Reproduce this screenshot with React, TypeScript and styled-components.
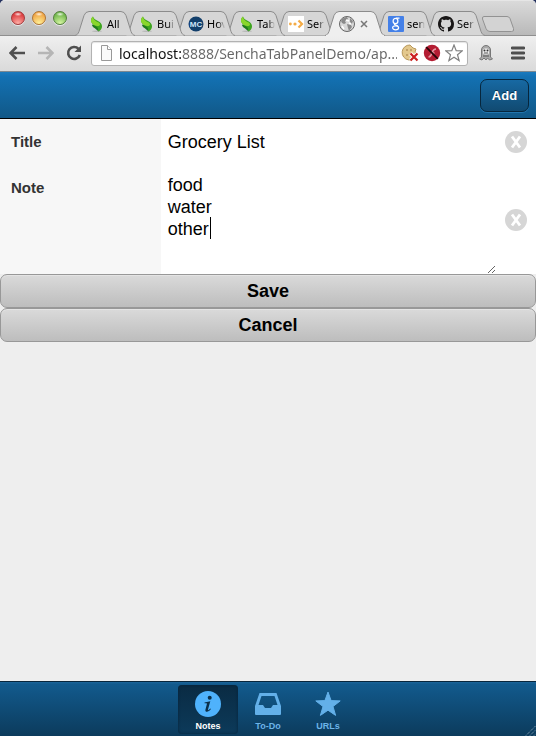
import React, { useState } from "react";
import styled, { createGlobalStyle, css } from "styled-components";

const uiFont = '"Noto Sans", "Open Sans", sans-serif';
const appFont = '"Liberation Sans", Arial, Helvetica, sans-serif';

const GlobalStyle = createGlobalStyle`
  * { box-sizing: border-box; }
  html, body { margin: 0; height: 100%; background: #23305e; }
  #root { height: 100%; }
  button, input, textarea { font: inherit; margin: 0; }
`;

const Window = styled.div`
  display: flex;
  flex-direction: column;
  height: 100vh;
  overflow: hidden;
  border-radius: 5px 5px 0 0;
  background: #eeeeee;
  font-family: ${appFont};
`;

/* ---------- browser chrome ---------- */

const TabStrip = styled.header`
  display: flex;
  align-items: flex-end;
  flex: none;
  height: 36px;
  padding-left: 11px;
  background: linear-gradient(#dadada, #b9b9b9);
  border-bottom: 1px solid #8f8f8f;
  border-top: 1px solid #e6e6e6;
  font-family: ${uiFont};
`;

const Lights = styled.div`
  display: flex;
  gap: 7px;
  width: 64px;
  flex: none;
  padding-bottom: 10px;
`;

const Light = styled.button<{ $dark: string; $mid: string; $pale: string }>`
  width: 14px;
  height: 14px;
  padding: 0;
  border: 1px solid ${(p) => p.$dark};
  border-radius: 50%;
  background:
    radial-gradient(ellipse 4px 2px at 50% 18%, #ffffffdd, #ffffff00),
    radial-gradient(circle at 50% 95%, ${(p) => p.$pale}, ${(p) => p.$mid} 75%);
  box-shadow: 0 1px 0 #e8e8e8;
`;

const Tabs = styled.nav`
  display: flex;
  align-items: flex-end;
  min-width: 0;
`;

const TabButton = styled.button<{ $order: number }>`
  position: relative;
  z-index: ${(p) => p.$order};
  display: flex;
  align-items: center;
  gap: 3px;
  flex: none;
  width: 60px;
  height: 25px;
  margin: 0 -10px -1px 0;
  padding: 0 10px 0 13px;
  border: 0;
  background: none;
  color: #000;
  font-size: 11px;
  text-align: left;
  white-space: nowrap;
  & > svg { flex: none; position: relative; }
`;

const TabShape = styled.svg`
  && { position: absolute; left: 0; top: 0; width: 100%; height: 100%; }
`;

const TabTitle = styled.span`
  position: relative;
  overflow: hidden;
  min-width: 0;
  flex: 1;
  mask-image: linear-gradient(90deg, #000 60%, #0000);
`;

const NewTab = styled.button`
  width: 34px;
  height: 16px;
  margin: 0 0 3px 6px;
  padding: 0;
  border: 0;
  background: none;
  & > svg { display: block; }
`;

const Toolbar = styled.div`
  display: flex;
  align-items: center;
  flex: none;
  height: 36px;
  padding: 0 11px 1px 9px;
  background: linear-gradient(#efefef, #dadada);
  border-bottom: 1px solid #7d8890;
  font-family: ${uiFont};
`;

const ToolButton = styled.button<{ $gap: number }>`
  display: flex;
  flex: none;
  padding: 0;
  margin-right: ${(p) => p.$gap}px;
  border: 0;
  background: none;
`;

const AddressBar = styled.form`
  display: flex;
  align-items: center;
  flex: 1;
  min-width: 0;
  height: 25px;
  gap: 4px;
  padding: 0 4px 0 9px;
  margin-right: 11px;
  border: 1px solid #b2b2b2;
  border-radius: 3px;
  background: #fff;
  box-shadow: inset 0 1px 1px #e4e4e4;
  & > svg, & > button { flex: none; }
`;

const Address = styled.input`
  flex: 1;
  min-width: 0;
  height: 20px;
  padding: 0;
  border: 0;
  outline: 0;
  background: linear-gradient(90deg, #111 62px, #666 62px);
  background-clip: text;
  color: transparent;
  font-size: 14px;
`;

/* ---------- application ---------- */

const TitleBar = styled.header`
  display: flex;
  align-items: center;
  justify-content: flex-end;
  flex: none;
  height: 47px;
  padding: 0 7px;
  background: linear-gradient(#1a7abf, #1371b3 10%, #115887);
  border-bottom: 1px solid #000;
`;

const AddButton = styled.button`
  width: 49px;
  height: 33px;
  padding: 0;
  border: 1px solid #07263c;
  border-radius: 7px;
  background: linear-gradient(#1769a3, #114a71);
  box-shadow: 0 1px 0 #2375ad;
  color: #fff;
  font-size: 13px;
  font-weight: bold;
  text-shadow: 0 -1px 0 #0007;
`;

const Form = styled.form`
  display: flex;
  flex-direction: column;
  flex: none;
`;

const Field = styled.div`
  display: grid;
  grid-template-columns: 30% 1fr 40px;
  background: #fff;
`;

const Label = styled.label`
  padding: 15px 11px;
  background: #f7f7f7;
  color: #333;
  font-size: 15px;
  line-height: 16px;
  font-weight: bold;
`;

const control = css`
  display: block;
  width: 100%;
  border: 0;
  outline: 0;
  border-radius: 0;
  background: #fff;
  color: #000;
  font-size: 18px;
  line-height: 22px;
`;

const TextInput = styled.input`
  ${control}
  height: 46px;
  padding: 0 7px;
`;

const EditArea = styled.div`
  position: relative;
`;

const TextArea = styled.textarea`
  ${control}
  height: 109px;
  padding: 9px 7px;
  resize: vertical;
  overflow: hidden;
`;

const Caret = styled.span`
  position: absolute;
  left: 49px;
  top: 52px;
  width: 1px;
  height: 22px;
  background: #000;
`;

const ClearButton = styled.button`
  display: flex;
  align-items: center;
  justify-content: center;
  padding: 0;
  border: 0;
  background: none;
`;

const WideButton = styled.button`
  height: 34px;
  padding: 0;
  border: 1px solid #989898;
  border-radius: 7px;
  background: linear-gradient(#dadada, #bdbdbd);
  box-shadow: inset 0 1px 0 #e4e4e4;
  color: #000;
  font-size: 18px;
  font-weight: bold;
`;

const Actions = styled.div`
  display: flex;
  flex-direction: column;
  background: #eee;
`;

const Space = styled.main`
  flex: 1;
  min-height: 0;
`;

const BottomBar = styled.nav`
  position: relative;
  display: flex;
  justify-content: center;
  flex: none;
  height: 55px;
  padding: 3px 0 2px;
  border-top: 1px solid #08263c;
  background: linear-gradient(#1c659b, #125a8d 4%, #0c3b5c);
`;

const BottomTab = styled.button<{ $active: boolean }>`
  display: flex;
  flex-direction: column;
  align-items: center;
  gap: 3px;
  width: 60px;
  padding: 6px 0 0;
  border: 0;
  border-radius: 4px;
  background: ${(p) => (p.$active ? "linear-gradient(#0a2b43, #0c3a5a)" : "none")};
  box-shadow: ${(p) => (p.$active ? "inset 0 0 3px #06233a" : "none")};
  color: ${(p) => (p.$active ? "#fff" : "#6cb4e8")};
  font-size: 9px;
  line-height: 12px;
  font-weight: bold;
`;

const Grip = styled.svg`
  position: absolute;
  right: 0;
  bottom: 0;
`;

/* ---------- drawings ---------- */

const Leaf = () => (
  <svg width="16" height="16" viewBox="0 0 16 16">
    <ellipse cx="9" cy="15.200" rx="5" ry=".8" fill="#0002" />
    <path d="M4 8.500c0 3 3 3 6.500 7 1-3 0-5-2-6z" fill="#1f7a1d" />
    <path d="M5 .6C2 3 2.500 7 6 9c2.500 1.500 4.500 2.500 4.500 6.500C14 13.500 14.600 10.500 13.500 8.200 12 5 6 4.500 5 .6z" fill="#3ea51f" />
    <path d="M5 .6C2 3 2.500 7 6 9c2 1 4 1.500 5.500.5C13 8 11 6.500 8.500 5.500 6.500 4.500 5.300 3 5 .6z" fill="#8bd62c" />
  </svg>
);

const McIcon = () => (
  <svg width="16" height="16" viewBox="0 0 16 16">
    <circle cx="8" cy="8" r="7.5" fill="#123f6b" />
    <text x="8" y="11" textAnchor="middle" fontFamily={appFont} fontSize="8" fontWeight="bold" fill="#cfe6f7">MC</text>
  </svg>
);

const ArrowDots = () => (
  <svg width="16" height="16" viewBox="0 0 16 16">
    <path d="M0 0h16v16H0z" fill="#fff" />
    <circle cx="2.4" cy="8" r="1.4" fill="#f4ab45" />
    <circle cx="7" cy="8" r="1.6" fill="#f4ab45" />
    <path d="M10.5 4.5 14 8l-3.500 3.500" fill="none" stroke="#f4ab45" strokeWidth="2.200" />
  </svg>
);

const Globe = () => (
  <svg width="18" height="18" viewBox="0 0 18 18">
    <circle cx="9" cy="9" r="7.500" fill="#d8d8d8" stroke="#666" />
    <path d="M3 6c1-3 4-4 6-4l1 2-3 2 1 2-2 1-2-1zM9 9l4 1 1 2-3 4-1-3zM12 3l3 3-1 3-2-2z" fill="#8a8a8a" />
    <path d="M4 11l2 3M8 5l3 1M11 8l2 1" stroke="#fff" strokeWidth="1.400" />
  </svg>
);

const GoogleIcon = () => (
  <svg width="16" height="16" viewBox="0 0 16 16">
    <rect width="16" height="16" rx="1" fill="#4480e8" />
    <ellipse cx="7.500" cy="5" rx="2.400" ry="2.700" fill="none" stroke="#fff" strokeWidth="1.200" />
    <path d="M8 2.200h3.500M7 7.800c-2 1 2.500 1.300 3 2.700" fill="none" stroke="#fff" strokeWidth="1.200" />
    <ellipse cx="7.600" cy="11.800" rx="3" ry="2" fill="none" stroke="#fff" strokeWidth="1.200" />
  </svg>
);

const OctoIcon = () => (
  <svg width="16" height="16" viewBox="0 0 16 16">
    <path
      fill="#181616"
      d="M8 0C3.580 0 0 3.580 0 8c0 3.540 2.290 6.530 5.470 7.590.4.070.55-.17.55-.38 0-.19-.01-.82-.01-1.490-2.010.37-2.530-.49-2.690-.94-.09-.23-.48-.94-.82-1.130-.28-.15-.68-.52-.01-.53.63-.01 1.080.58 1.230.82.72 1.210 1.870.87 2.330.66.070-.52.28-.87.51-1.070-1.780-.2-3.640-.89-3.640-3.950 0-.87.31-1.590.82-2.150-.08-.2-.36-1.020.08-2.120 0 0 .67-.21 2.200.82.64-.18 1.320-.27 2-.27s1.360.09 2 .27c1.530-1.040 2.200-.82 2.200-.82.44 1.100.16 1.920.08 2.120.51.56.82 1.270.82 2.150 0 3.070-1.870 3.750-3.650 3.950.29.25.54.73.54 1.480 0 1.070-.01 1.930-.01 2.200 0 .21.15.46.55.38A8.010 8.010 0 0 0 16 8c0-4.420-3.580-8-8-8z"
    />
  </svg>
);

const CloseX = () => (
  <svg width="10" height="10" viewBox="0 0 10 10">
    <path d="m2 2 6 6M8 2 2 8" stroke="#777" strokeWidth="1.500" />
  </svg>
);

const Arrow = ({ forward }: { forward?: boolean }) => (
  <svg width="16" height="16" viewBox="0 0 16 16">
    <path
      d={forward ? "M0 8h14M8.500 2l6 6-6 6" : "M16 8H2M7.500 2l-6 6 6 6"}
      fill="none"
      stroke={forward ? "#b5b5b5" : "#4f4f4f"}
      strokeWidth="2.600"
    />
  </svg>
);

const Reload = () => (
  <svg width="16" height="16" viewBox="0 0 16 16">
    <path d="M12.500 3.800A6 6 0 1 0 13.800 10" fill="none" stroke="#4f4f4f" strokeWidth="2.600" />
    <path d="M15 .5V7H8.500z" fill="#4f4f4f" />
  </svg>
);

const PageIcon = () => (
  <svg width="14" height="16" viewBox="0 0 14 16">
    <path d="M.5.5h6l4 4v11H.5z" fill="#fafafa" stroke="#999" />
    <path d="M6.500.5v4h4" fill="#fff" stroke="#999" />
  </svg>
);

const Cookie = () => (
  <svg width="18" height="18" viewBox="0 0 18 18">
    <path d="M9 1a7.500 7.500 0 1 0 7 9l-2-2 1-3-3-1z" fill="#e3c88d" stroke="#b8975a" />
    <circle cx="6" cy="6" r=".8" fill="#98703a" />
    <circle cx="10" cy="6" r=".8" fill="#98703a" />
    <circle cx="6" cy="11" r=".8" fill="#98703a" />
    <path d="m9.500 9.500 7 7m0-7-7 7" stroke="#fff" strokeWidth="4" />
    <path d="m9.500 9.500 7 7m0-7-7 7" stroke="#cb2020" strokeWidth="2.200" />
  </svg>
);

const FlashOff = () => (
  <svg width="18" height="18" viewBox="0 0 18 18">
    <circle cx="9" cy="9" r="8.200" fill="#b41d33" />
    <path d="M13 5c-3 0-3.300 2-4 4s-1.300 4-3.500 4M9 9h2.500" fill="none" stroke="#e79aa5" strokeWidth="1.600" />
    <path d="m3.200 3.200 11.600 11.600" stroke="#2a0508" strokeWidth="1.800" />
  </svg>
);

const StarOutline = () => (
  <svg width="18" height="18" viewBox="0 0 18 18">
    <path d="m9 1 2.200 5.600 6 .3-4.700 3.800 1.600 5.900L9 13.300l-5.100 3.300 1.600-5.900L.8 6.900l6-.3z" fill="#fff" stroke="#808080" strokeWidth="1.200" />
  </svg>
);

const Ghost = () => (
  <svg width="14" height="16" viewBox="0 0 14 16">
    <path d="M2.500 12V5a4.500 4.500 0 0 1 9 0v7l2 2-3 1-2-2-1.500 2L5 13l-2 2-2.500-1z" fill="#aaa" stroke="#777" />
    <rect x="4" y="3.500" width="6" height="6" rx="2" fill="#eee" />
    <circle cx="5.500" cy="5.500" r="1" fill="#333" />
    <circle cx="8.500" cy="5.500" r="1" fill="#333" />
    <path d="M5 8h4M4 11h6" stroke="#555" />
  </svg>
);

const MenuIcon = () => (
  <svg width="14" height="14" viewBox="0 0 14 14">
    <path d="M1 2h12M1 7h12M1 12h12" stroke="#4f4f4f" strokeWidth="2.800" strokeLinecap="round" />
  </svg>
);

const ClearIcon = () => (
  <svg width="22" height="22" viewBox="0 0 22 22">
    <circle cx="11" cy="11" r="11" fill="#d6d6d6" />
    <path d="m7 5.500 8 11M15 5.500l-8 11" stroke="#fff" strokeWidth="2.800" />
  </svg>
);

const InfoIcon = () => (
  <svg width="26" height="26" viewBox="0 0 26 26">
    <circle cx="13" cy="13" r="13" fill="#4fb2fc" />
    <circle cx="14.700" cy="6.700" r="2" fill="#0b2f4a" />
    <path d="M9.500 11.500 15.300 10.200 13 18.500c-.3 1.200.6.900 2.200-1l.7.600c-2 3-6 3.900-5.500.7l1.500-5.800c.2-.9-.5-.9-2.400-.7z" fill="#0b2f4a" />
  </svg>
);

const TrayIcon = () => (
  <svg width="26" height="26" viewBox="0 0 26 26">
    <path
      fillRule="evenodd"
      d="M4.500 2h17L26 15v8q0 1-1 1H1q-1 0-1-1v-8zM6.500 5 3.500 14H8l2 3h6l2-3h4.500L19.500 5z"
      fill="#63b0e9"
    />
  </svg>
);

const StarIcon = () => (
  <svg width="26" height="26" viewBox="0 0 26 26">
    <path d="m13 1 3.100 8.600 9.100.3-7.200 5.600 2.600 8.900-7.600-5.200-7.600 5.200L8 15.500.8 9.900l9.100-.3z" fill="#63b0e9" stroke="#63b0e9" strokeLinejoin="round" />
  </svg>
);

const tabs = [
  { title: "All", icon: <Leaf /> },
  { title: "Bui", icon: <Leaf /> },
  { title: "Hov", icon: <McIcon /> },
  { title: "Tab", icon: <Leaf /> },
  { title: "Ser", icon: <ArrowDots /> },
  { title: "", icon: <Globe />, active: true },
  { title: "sen", icon: <GoogleIcon /> },
  { title: "Ser", icon: <OctoIcon /> },
];

const sections = [
  { name: "Notes", icon: <InfoIcon /> },
  { name: "To-Do", icon: <TrayIcon /> },
  { name: "URLs", icon: <StarIcon /> },
];

export default function App() {
  const [title, setTitle] = useState("Grocery List");
  const [note, setNote] = useState("food\nwater\nother");
  const [section, setSection] = useState("Notes");

  return (
    <>
      <GlobalStyle />
      <Window>
        <TabStrip>
          <Lights>
            <Light aria-label="Close window" $dark="#a13a3c" $mid="#dc3c3e" $pale="#ffb0a8" />
            <Light aria-label="Minimize window" $dark="#ae7434" $mid="#f0a545" $pale="#fff29a" />
            <Light aria-label="Zoom window" $dark="#537f3c" $mid="#71b64c" $pale="#d8f7a4" />
          </Lights>
          <Tabs aria-label="Browser tabs">
            {tabs.map((tab, i) => (
              <TabButton key={i} $order={tab.active ? 20 : 10 - i} aria-label={tab.title || "Current tab"}>
                <TabShape viewBox="0 0 60 25" preserveAspectRatio="none">
                  <path
                    d="M0 24.500C2 24 3 23 4 20.500L9 4.500Q10.500.5 14 .5H46Q49.500.5 51 4.500L56 20.500C57 23 58 24 60 24.500"
                    fill={tab.active ? "#efefef" : "#d6d6d6"}
                    stroke="#8c8c8c"
                  />
                  {tab.active && <path d="M1 24.500h58" stroke="#efefef" />}
                </TabShape>
                {tab.icon}
                {tab.active ? <CloseX /> : <TabTitle>{tab.title}</TabTitle>}
              </TabButton>
            ))}
          </Tabs>
          <NewTab aria-label="New tab">
            <svg width="34" height="16" viewBox="0 0 34 16">
              <path d="M3 .5h23q2 0 3 2l3.500 10q1 3-2 3H9q-3 0-4-3L1.500 3q-.5-2.500 1.500-2.500z" fill="#d3d3d3" stroke="#929292" />
            </svg>
          </NewTab>
        </TabStrip>

        <Toolbar>
          <ToolButton aria-label="Back" $gap={13}><Arrow /></ToolButton>
          <ToolButton aria-label="Forward" $gap={12}><Arrow forward /></ToolButton>
          <ToolButton aria-label="Reload" $gap={9}><Reload /></ToolButton>
          <AddressBar onSubmit={(e) => e.preventDefault()}>
            <PageIcon />
            <Address aria-label="Address" readOnly value="localhost:8888/SenchaTabPanelDemo/ap..." />
            <ToolButton type="button" aria-label="Cookies blocked" $gap={0}><Cookie /></ToolButton>
            <ToolButton type="button" aria-label="Plug-in blocked" $gap={0}><FlashOff /></ToolButton>
            <ToolButton type="button" aria-label="Bookmark" $gap={0}><StarOutline /></ToolButton>
          </AddressBar>
          <ToolButton aria-label="Extension" $gap={18}><Ghost /></ToolButton>
          <ToolButton aria-label="Menu" $gap={0}><MenuIcon /></ToolButton>
        </Toolbar>

        <TitleBar>
          <AddButton>Add</AddButton>
        </TitleBar>

        <Form onSubmit={(e) => e.preventDefault()}>
          <Field>
            <Label htmlFor="title">Title</Label>
            <TextInput id="title" value={title} onChange={(e) => setTitle(e.target.value)} />
            <ClearButton type="button" aria-label="Clear title" onClick={() => setTitle("")}><ClearIcon /></ClearButton>
          </Field>
          <Field>
            <Label htmlFor="note">Note</Label>
            <EditArea>
              <TextArea id="note" value={note} onChange={(e) => setNote(e.target.value)} />
              <Caret />
            </EditArea>
            <ClearButton type="button" aria-label="Clear note" onClick={() => setNote("")}><ClearIcon /></ClearButton>
          </Field>
          <Actions>
            <WideButton type="submit">Save</WideButton>
            <WideButton type="button">Cancel</WideButton>
          </Actions>
        </Form>

        <Space />

        <BottomBar>
          {sections.map((s) => (
            <BottomTab key={s.name} $active={section === s.name} onClick={() => setSection(s.name)}>
              {s.icon}
              {s.name}
            </BottomTab>
          ))}
          <Grip width="12" height="12" viewBox="0 0 12 12">
            <path d="M2 11.500 11.500 2M6 11.500 11.500 6M10 11.500l1.500-1.500" stroke="#9bb4c6" strokeDasharray="1 1" />
          </Grip>
        </BottomBar>
      </Window>
    </>
  );
}
